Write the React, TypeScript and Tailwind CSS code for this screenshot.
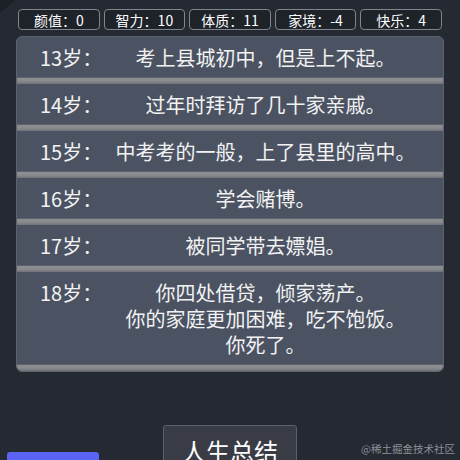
import React from "react";

const stats = [
  { label: "颜值", value: 0 },
  { label: "智力", value: 10 },
  { label: "体质", value: 11 },
  { label: "家境", value: -4 },
  { label: "快乐", value: 4 },
];

const events: { age: number; lines: string[] }[] = [
  { age: 13, lines: ["考上县城初中，但是上不起。"] },
  { age: 14, lines: ["过年时拜访了几十家亲戚。"] },
  { age: 15, lines: ["中考考的一般，上了县里的高中。"] },
  { age: 16, lines: ["学会赌博。"] },
  { age: 17, lines: ["被同学带去嫖娼。"] },
  {
    age: 18,
    lines: ["你四处借贷，倾家荡产。", "你的家庭更加困难，吃不饱饭。", "你死了。"],
  },
];

const Separator: React.FC = () => (
  <div className="h-[7px] border-t border-[#5e626a] bg-gradient-to-b from-[#8d8e91] via-[#8a8b8e] to-[#6f7278]" />
);

const App: React.FC = () => {
  return (
    <div className="relative w-[460px] h-[460px] overflow-hidden bg-[#252931] font-['Noto_Sans_CJK_SC','Noto_Sans',sans-serif] text-white">
      <svg className="absolute left-0 top-0" width="16" height="14" viewBox="0 0 16 14">
        <polygon points="0,0 15,0 0,13" fill="#1d2027" />
      </svg>

      {/* stats bar */}
      <div className="flex gap-1 pl-[18px] pt-[9px]">
        {stats.map((s) => (
          <div
            key={s.label}
            className="flex h-[21px] w-[81.6px] items-center justify-center rounded-[4px] border border-[#80858e] bg-[#1e2229] text-[14px] leading-none"
          >
            {s.label}：{s.value}
          </div>
        ))}
      </div>

      {/* life events */}
      <div className="mx-4 mt-[6px] overflow-hidden rounded-md border border-[#5d6470] bg-[#4b5363]">
        {events.map((e) => (
          <div key={e.age}>
            <div className="flex pt-[8px] pb-[6px] pl-[23px] pr-[20px] text-[20px] leading-[26px] text-[#f2f2f2]">
              <div className="w-[68px] shrink-0">{e.age}岁：</div>
              <div className="flex-1 text-center">
                {e.lines.map((l) => (
                  <div key={l}>{l}</div>
                ))}
              </div>
            </div>
            <Separator />
          </div>
        ))}
      </div>

      {/* summary button */}
      <div className="mt-[53px] flex justify-center">
        <button className="h-[50px] w-[134px] rounded-[3px] border border-[#5c6068] bg-[#393c45] pt-[1px] text-[24px] leading-[36px] text-white">
          人生总结
        </button>
      </div>

      <div className="absolute left-[7px] top-[452px] h-[30px] w-[92px] rounded-[3px] bg-[#5a63f2] pl-[15px] pt-[6px] text-[14px] leading-[20px] text-white">
        再次重开
      </div>

      <div className="absolute right-[5px] top-[442px] text-[10.5px] leading-[14px] text-[#8c9099]">
        @稀土掘金技术社区
      </div>
    </div>
  );
};

export default App;
